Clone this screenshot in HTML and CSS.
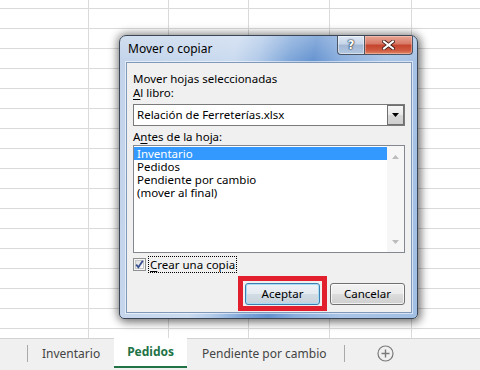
FILE: index.html
```html
<!DOCTYPE html>
<html>
<head>
<meta charset="utf-8">
<title>Mover o copiar</title>
<link rel="stylesheet" href="styles.css">
</head>
<body>
<div class="app">
  <div class="sheet">
    <div class="col c1"></div>
    <div class="col c2"></div>
    <div class="col c3"></div>
    <div class="col c4"></div>
    <div class="col c5"></div>
    <div class="col c6"></div>
  </div>
  <div class="tabs">
    <span class="tsep"></span>
    <div class="tab">Inventario</div>
    <div class="tab active">Pedidos</div>
    <div class="tab last">Pendiente por cambio</div>
    <span class="tsep"></span>
    <div class="add">
      <svg width="17" height="17" viewBox="0 0 17 17"><circle cx="8.5" cy="8.5" r="7.5" fill="none" stroke="#7a7a7a" stroke-width="1.2"/><path d="M8.5 4.5v8M4.5 8.5h8" stroke="#7a7a7a" stroke-width="1.4"/></svg>
    </div>
  </div>
</div>

<div class="dialog">
  <div class="titlebar">
    <span class="title">Mover o copiar</span>
    <div class="capbtns">
      <div class="cbtn help"><span>?</span></div>
      <div class="cbtn close">
        <svg width="13" height="10" viewBox="0 0 13 10"><path d="M2 1.5L11 8.5M11 1.5L2 8.5" stroke="#3a1a14" stroke-width="3.6" stroke-linecap="square"/><path d="M2 1.5L11 8.5M11 1.5L2 8.5" stroke="#fff" stroke-width="2" stroke-linecap="square"/></svg>
      </div>
    </div>
  </div>
  <div class="client">
    <div class="lbl">Mover hojas seleccionadas</div>
    <div class="lbl"><u>A</u>l libro:</div>
    <div class="combo">
      <span class="combo-text">Relación de Ferreterías.xlsx</span>
      <span class="combo-btn"><svg width="7" height="4" viewBox="0 0 7 4"><path d="M0 0h7L3.5 4z" fill="#000"/></svg></span>
    </div>
    <div class="lbl lbl3">A<u>n</u>tes de la hoja:</div>
    <div class="listbox">
      <div class="items">
        <div class="item sel">Inventario</div>
        <div class="item">Pedidos</div>
        <div class="item">Pendiente por cambio</div>
        <div class="item">(mover al final)</div>
      </div>
      <div class="vscroll">
        <svg width="7" height="4" viewBox="0 0 7 4"><path d="M0 4h7L3.5 0z" fill="#bcbcbc"/></svg>
        <svg width="7" height="4" viewBox="0 0 7 4"><path d="M0 0h7L3.5 4z" fill="#bcbcbc"/></svg>
      </div>
    </div>
    <div class="chkrow">
      <span class="chk">
        <svg width="13" height="13" viewBox="0 0 13 13">
          <defs><linearGradient id="cg" x1="0" y1="0" x2="1" y2="1"><stop offset="0" stop-color="#dcdcdc"/><stop offset="1" stop-color="#ffffff"/></linearGradient></defs>
          <rect x="0.5" y="0.5" width="12" height="12" fill="#f4f4f4" stroke="#8e8f8f"/>
          <rect x="2.5" y="2.5" width="8" height="8" fill="url(#cg)" stroke="#c6c6c6"/>
          <path d="M3.2 6.6L5.4 9.2L9.8 2.8" fill="none" stroke="#3a4f8f" stroke-width="1.8"/>
        </svg>
      </span>
      <span class="chklbl"><u>C</u>rear una copia</span>
    </div>
    <div class="btnrow">
      <div class="mark"><div class="btn default">Aceptar</div></div>
      <div class="btn">Cancelar</div>
    </div>
  </div>
</div>
</body>
</html>
```

FILE: styles.css
```css
* { box-sizing: border-box; }
html, body { margin: 0; padding: 0; }
body {
  width: 480px;
  height: 370px;
  overflow: hidden;
  position: relative;
  background: #fff;
  font-family: "Noto Sans", "Open Sans", sans-serif;
  color: #000;
}

/* ---------- spreadsheet ---------- */
.app { display: flex; flex-direction: column; height: 370px; }
.sheet {
  height: 338px;
  display: flex;
  background-image: linear-gradient(to bottom, transparent 19px, #dadada 19px);
  background-size: 100% 20px;
  background-position: 0 9px;
}
.col { height: 100%; border-right: 1px solid #dadada; flex: none; }
.c1 { width: 89px; }
.c2 { width: 80px; }
.c3 { width: 80px; }
.c4 { width: 81px; }
.c5 { width: 82px; }
.c6 { flex: 1; border-right: 0; }

.tabs {
  height: 32px;
  flex: none;
  display: flex;
  align-items: stretch;
  background: #f0f0f0;
  border-top: 1px solid #d2d2d2;
  padding-left: 27px;
  font-size: 12px;
  color: #444;
}
.tsep { width: 1px; height: 17px; background: #a9a9a9; align-self: center; margin-top: -2px; }
.tab { display: flex; align-items: center; padding: 0 14px 3px; white-space: nowrap; }
.tab.last { padding: 0 17px 3px 15px; }
.tab.active {
  background: #fff;
  color: #217346;
  font-weight: bold;
  padding: 0 13px 1px;
  margin-top: -1px;
  border-bottom: 2px solid #217346;
  margin-bottom: 2px;
}
.add { display: flex; align-items: center; padding: 0 0 3px 32px; }
.add svg { display: block; }

/* ---------- dialog ---------- */
.dialog {
  position: absolute;
  left: 119px;
  top: 35px;
  width: 299px;
  height: 284px;
  border: 1px solid #3b4656;
  border-radius: 7px 7px 5px 5px;
  padding: 0 5px 5px 6px;
  display: flex;
  flex-direction: column;
  background:
    linear-gradient(to bottom, rgba(255,255,255,0.25), rgba(255,255,255,0) 26px),
    linear-gradient(100deg, #c2d3ea 0%, #cadaef 34%, #b2cae9 41%, #7ea6d9 50%, #6593d0 57%, #8bafde 65%, #a9c4e6 78%, #a2bfe4 100%);
  box-shadow: 0 0 9px 2px rgba(0,0,0,0.42), 3px 4px 10px rgba(0,0,0,0.25);
}
.titlebar {
  height: 26px;
  flex: none;
  display: flex;
  align-items: flex-start;
  justify-content: space-between;
}
.title { font-size: 12px; line-height: 16px; margin: 5px 0 0 2px; }
.capbtns { display: flex; margin-right: -1px; }
.cbtn {
  height: 19px;
  border: 1px solid #4a5566;
  border-top: 0;
  display: flex;
  align-items: center;
  justify-content: center;
}
.help {
  width: 27px;
  border-radius: 0 0 0 4px;
  border-right: 0;
  background: linear-gradient(to bottom, #dfe8f3 0%, #c5d5e9 45%, #a3b8d4 50%, #b3c7e0 100%);
  box-shadow: inset 0 0 0 1px rgba(255,255,255,0.45);
}
.help span {
  font-family: "DejaVu Sans", sans-serif;
  font-weight: bold;
  font-size: 12px;
  line-height: 12px;
  color: #fff;
  text-shadow: 0 0 1px #1c2a3c, 0 0 1px #1c2a3c, 0 0 2px #1c2a3c;
}
.close {
  width: 49px;
  border-radius: 0 0 4px 0;
  background: linear-gradient(to bottom, #e8a595 0%, #d77764 45%, #c4432d 50%, #cf5a40 80%, #e08868 100%);
  box-shadow: inset 0 0 0 1px rgba(255,210,200,0.45);
}
.close svg { display: block; }

.client {
  flex: 1;
  background: #f0f0f0;
  border: 1px solid #8099bb;
  box-shadow: 0 0 0 1px rgba(255,255,255,0.55);
  padding: 9px 6px 0 6px;
  display: flex;
  flex-direction: column;
  font-size: 11.5px;
}
.lbl { line-height: 14px; height: 14px; white-space: nowrap; }
.lbl3 { margin-top: 4px; }
u { text-decoration-thickness: 1px; text-underline-offset: 2px; }

.combo {
  margin-top: 4px;
  height: 22px;
  border: 1px solid #7a7a7a;
  background: #fff;
  display: flex;
  align-items: stretch;
}
.combo-text { flex: 1; line-height: 19px; padding-left: 3px; }
.combo-btn {
  width: 17px;
  border: 1px solid #707070;
  background: linear-gradient(to bottom, #f6f6f6 0%, #e8e8e8 50%, #d8d8d8 51%, #cfcfcf 100%);
  display: flex;
  align-items: center;
  justify-content: center;
}
.combo-btn svg { display: block; }

.listbox {
  margin-top: 1px;
  height: 108px;
  border: 1px solid #828790;
  background: #fff;
  display: flex;
}
.items { flex: 1; padding-top: 1px; }
.item { height: 13px; line-height: 13px; padding-left: 3px; white-space: nowrap; }
.item.sel { background: #3399ff; color: #fff; }
.vscroll {
  width: 17px;
  background: #f6f6f6;
  display: flex;
  flex-direction: column;
  align-items: center;
  justify-content: space-between;
  padding: 9px 0 8px;
}
.vscroll svg { display: block; }

.chkrow { margin-top: 3px; height: 17px; display: flex; align-items: center; }
.chk { width: 13px; height: 13px; margin-right: 2px; }
.chk svg { display: block; }
.chklbl {
  border: 1px dotted #000;
  height: 17px;
  line-height: 15px;
  padding: 0 1px 0 1px;
  white-space: nowrap;
}

.btnrow {
  margin-top: 3px;
  display: flex;
  justify-content: flex-end;
  align-items: center;
  gap: 3px;
}
.mark {
  border: 5px solid #e21f2c;
  padding: 2px 2px 1px 2px;
}
.btn {
  width: 75px;
  height: 22px;
  border: 1px solid #707070;
  border-radius: 3px;
  background: linear-gradient(to bottom, #f2f2f2 0%, #ebebeb 50%, #dddddd 51%, #cfcfcf 100%);
  box-shadow: inset 0 0 0 1px rgba(255,255,255,0.7);
  display: flex;
  align-items: center;
  justify-content: center;
  font-size: 11.5px;
  line-height: 14px;
}
.btn.default {
  border-color: #3c7fb1;
  background: linear-gradient(to bottom, #eef3f7 0%, #e3eaf0 50%, #d2dce4 51%, #c6d2dc 100%);
  box-shadow: inset 0 0 0 1px #a7dcf6;
}
```
